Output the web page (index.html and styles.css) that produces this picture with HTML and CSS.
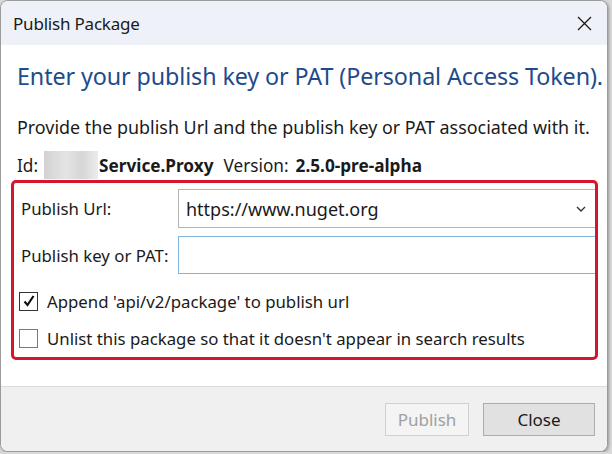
FILE: index.html
```html
<!DOCTYPE html>
<html lang="en">
  <head>
    <meta charset="UTF-8" />
    <title>Publish Package</title>
    <link rel="stylesheet" href="styles.css">
  </head>
  <body>
    <div class="window">
      <div class="titlebar">
        <span class="title">Publish Package</span>
        <span class="close-x">
          <svg width="15" height="15" viewBox="0 0 15 15">
            <path d="M1 1 L14 14 M14 1 L1 14" stroke="#1a1a1a" stroke-width="1.3" fill="none" />
          </svg>
        </span>
      </div>

      <div class="content">
        <h1>Enter your publish key or PAT (Personal Access Token).</h1>
        <p class="hint">Provide the publish Url and the publish key or PAT associated with it.</p>
        <div class="idline">
          <span>Id:</span>
          <span class="blur"></span>
          <b>Service.Proxy</b>
          <span class="ver">Version:</span>
          <b>2.5.0-pre-alpha</b>
        </div>

        <div class="highlight">
          <div class="row">
            <label>Publish Url:</label>
            <div class="combo">
              <span>https://www.nuget.org</span>
              <svg width="10" height="6" viewBox="0 0 10 6">
                <path d="M1 1 L5 5 L9 1" stroke="#333" stroke-width="1.4" fill="none" />
              </svg>
            </div>
          </div>
          <div class="row">
            <label>Publish key or PAT:</label>
            <div class="textbox"></div>
          </div>
          <div class="check first">
            <span class="box on">
              <svg width="14" height="14" viewBox="0 0 14 14">
                <path d="M2.5 7.5 L5.5 11 L11.5 2" stroke="#111" stroke-width="2.2" fill="none" />
              </svg>
            </span>
            <span>Append 'api/v2/package' to publish url</span>
          </div>
          <div class="check">
            <span class="box"></span>
            <span>Unlist this package so that it doesn't appear in search results</span>
          </div>
        </div>
      </div>

      <div class="footer">
        <button class="btn" disabled>Publish</button>
        <button class="btn">Close</button>
      </div>
    </div>
  </body>
</html>
```

FILE: styles.css
```css
html {
  background: #d9d9d9;
}
body {
  margin: 0;
  font-family: "Segoe UI", "Noto Sans", "Open Sans", sans-serif;
  color: #1a1a1a;
}
.window {
  width: 606px;
  height: 450px;
  border: 1px solid #9b9b9b;
  border-radius: 8px;
  overflow: hidden;
  background: #fff;
  display: flex;
  flex-direction: column;
  box-shadow: 1px 1px 3px rgba(0, 0, 0, 0.3);
}
.titlebar {
  height: 44px;
  background: #eef1f7;
  display: flex;
  align-items: center;
  justify-content: space-between;
  padding: 0 15px 0 12px;
  flex-shrink: 0;
}
.title {
  font-size: 17px;
  letter-spacing: -0.2px;
}
.close-x {
  display: flex;
}
.content {
  flex: 1;
  padding: 0 9px 0 10px;
}
h1 {
  margin: 15px 0 0 6px;
  font-size: 23.3px;
  line-height: 32px;
  font-weight: normal;
  color: #1e4b8a;
  letter-spacing: -0.1px;
  white-space: nowrap;
}
.hint {
  margin: 23px 0 0 6px;
  font-size: 17.9px;
  line-height: 24px;
  white-space: nowrap;
}
.idline {
  margin: 12px 0 0 6px;
  font-size: 17.2px;
  display: flex;
  align-items: center;
  height: 28px;
}
.blur {
  display: inline-block;
  width: 54px;
  height: 28px;
  margin: 0 1px 0 6px;
  background: linear-gradient(90deg, #d2d2d2, #e4e4e4 40%, #d6d6d6 70%, #ececec);
}
.ver {
  margin: 0 7px 0 10px;
}
.highlight {
  margin-top: 1px;
  border: 3px solid #d4152c;
  border-radius: 5px;
  padding: 6px 0 6px 7px;
  font-size: 16.8px;
}
.row {
  display: flex;
  align-items: center;
  margin-bottom: 8px;
}
.row label {
  width: 157px;
}
.combo,
.textbox {
  flex: 1;
  height: 39px;
  box-sizing: border-box;
  border: 1px solid #b4b4b4;
  border-right: none;
  display: flex;
  align-items: center;
  justify-content: space-between;
  padding: 0 9px 0 7px;
  font-size: 18px;
}
.textbox {
  height: 38px;
  border-color: #7eb4e0;
}
.check {
  display: flex;
  align-items: center;
  gap: 9px;
  height: 26px;
  margin: 11px 0 0 -2px;
}
.check.first {
  margin-top: 14px;
}
.box {
  width: 19px;
  height: 19px;
  box-sizing: border-box;
  border: 1px solid #7a7a7a;
  display: flex;
  align-items: center;
  justify-content: center;
}
.box.on {
  border-color: #333;
}
.footer {
  height: 64px;
  flex-shrink: 0;
  background: #f0f0f0;
  border-top: 1px solid #dcdcdc;
  display: flex;
  align-items: center;
  justify-content: flex-end;
  gap: 14px;
  padding: 0 12px 0 0;
}
.btn {
  font-family: inherit;
  font-size: 17px;
  height: 33px;
  padding: 0;
  border: 1px solid #adadad;
  background: #e1e1e1;
  color: #1a1a1a;
  width: 112px;
}
.btn:disabled {
  width: 84px;
  background: #f4f4f4;
  border-color: #d0d0d0;
  color: #a0a0a0;
}
```
